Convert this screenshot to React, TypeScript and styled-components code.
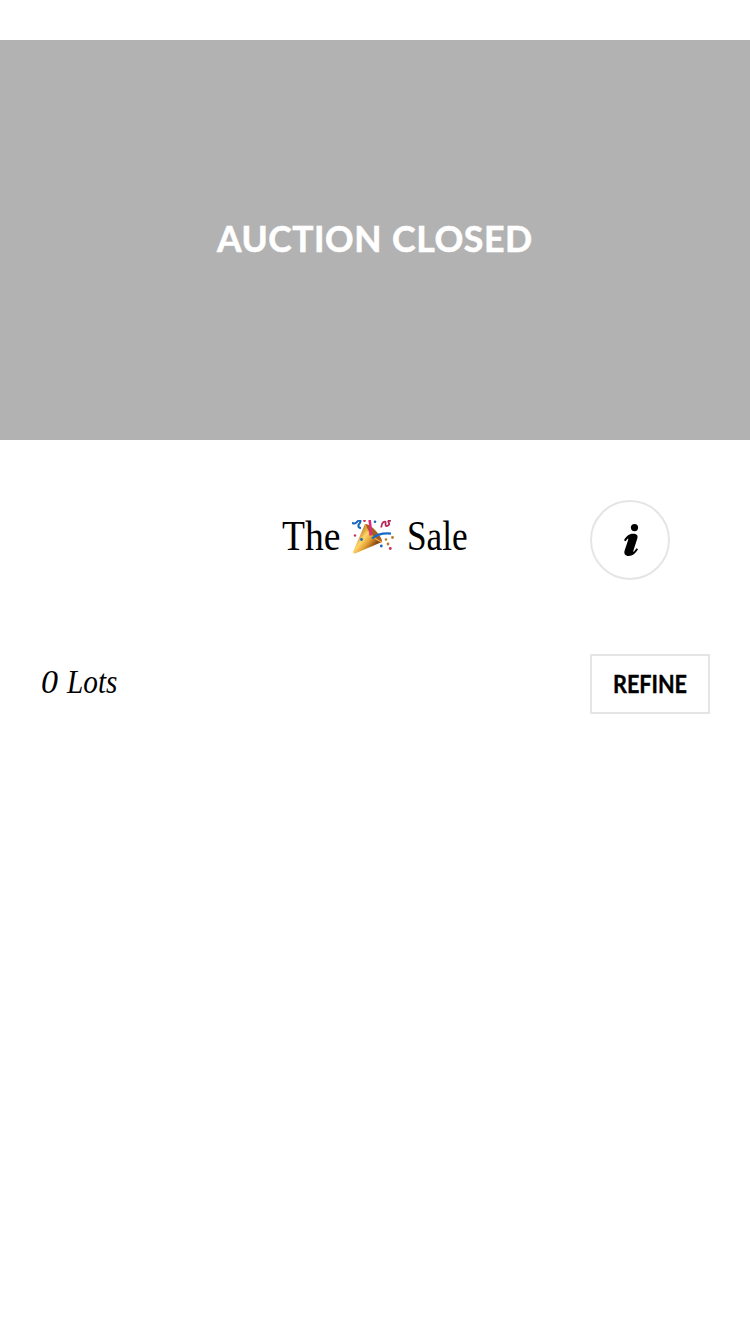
import React from 'react';
import styled, { createGlobalStyle } from 'styled-components';

const Global = createGlobalStyle`
  * { box-sizing: border-box; }
  html, body { margin: 0; background: #fff; color: #000; }
`;

const Page = styled.main`
  min-height: 1334px;
  padding-top: 40px;
  background: #fff;
`;

const Hero = styled.section`
  display: flex;
  align-items: center;
  justify-content: center;
  height: 400px;
  background: #b2b2b2;
`;

const HeroLabel = styled.div`
  display: flex;
  gap: 10px;
  padding: 0 1px 5px 0;
  font: 700 37px/48px Lato, sans-serif;
  color: #fff;
  -webkit-text-stroke: 0.6px currentColor;
`;

const Word = styled.span<{ $spacing?: number; $scale?: number; $width?: number }>`
  display: block;
  white-space: nowrap;
  width: ${p => (p.$width ? `${p.$width}px` : 'auto')};
  letter-spacing: ${p => p.$spacing ?? 0}px;
  transform: scaleX(${p => p.$scale ?? 1});
  transform-origin: left center;
`;

const TitleRow = styled.header`
  display: grid;
  grid-template-columns: 80px 1fr 80px;
  align-items: center;
  padding: 60px 80px 0;
`;

const Title = styled.h1`
  grid-column: 2;
  display: flex;
  justify-content: center;
  margin: 0;
  padding: 0 2px 9px 0;
  font: 400 42px/54px "Liberation Serif", serif;
`;

const Popper = styled.svg`
  width: 42px;
  height: 34px;
  margin: 11px 13px 0 12px;
`;

const InfoButton = styled.button`
  display: flex;
  align-items: center;
  justify-content: center;
  width: 80px;
  height: 80px;
  padding: 0 0 0 2px;
  border: 2px solid #e5e5e5;
  border-radius: 50%;
  background: #fff;
`;

const Toolbar = styled.div`
  display: flex;
  align-items: center;
  justify-content: space-between;
  padding: 74px 40px 0;
`;

const Lots = styled.p`
  display: flex;
  gap: 8px;
  margin: 0;
  padding: 0 0 4px 1px;
  font: italic 400 34px/56px "Liberation Serif", serif;
`;

const RefineButton = styled.button`
  display: flex;
  align-items: center;
  justify-content: center;
  width: 120px;
  height: 60px;
  padding: 0 0 0 2px;
  border: 2px solid #e5e5e5;
  background: #fff;
  color: #000;
  font: 700 24px/30px Lato, sans-serif;
  -webkit-text-stroke: 0.4px currentColor;
`;

const PartyPopper = () => (
  <Popper viewBox="0 0 42 34" aria-label="party popper">
    <defs>
      <linearGradient id="cone" x1="0" y1="0.2" x2="0.9" y2="0.9">
        <stop offset="0.15" stopColor="#b8701c" />
        <stop offset="0.4" stopColor="#ffd668" />
        <stop offset="0.6" stopColor="#e09a30" />
        <stop offset="0.8" stopColor="#8a4c12" />
      </linearGradient>
    </defs>
    <path d="M13 4C19 5 29 16 30 22L3 33.5Q.7 34 1.2 31.5Z" fill="url(#cone)" />
    <path d="M13 4C19 4 30 16 30 22C25 22 13 10 13 4Z" fill="#a65e20" />
    <path d="M13.5 4.5C14 11 23 20 29.5 21.8" fill="none" stroke="#edae43" strokeWidth="1.2" />
    <path d="M17.5-1Q18.8 7 18.5 15.5" fill="none" stroke="#dc2c7b" strokeWidth="2.6" />
    <path d="M20 18.5Q27 12.5 39 13.6" fill="none" stroke="#176bc8" strokeWidth="2.3" />
    <path d="M0 2.5Q2 4.5 4.5 2.5Q7-.5 8.5 1Q8.5 3 6.5 5Q6 8 9 8" fill="none" stroke="#1768bd" strokeWidth="2.1" />
    <path d="M29.5 7.5Q29 4 31.5 2Q34 .5 33.5 4Q33.5 7 36 5.5Q38 4.5 36.5 2Q35.5 .5 39 .5" fill="none" stroke="#b82659" strokeWidth="1.8" />
    <g fill="#c92f58"><circle cx="3" cy="15.5" r="1.2" /><circle cx="12.5" cy=".8" r="1.3" /><circle cx="38.3" cy="28.5" r="1.4" /></g>
    <g fill="#1768bd"><circle cx="23" cy="1.7" r="1.3" /><circle cx="9.5" cy="19.5" r="1.4" /><circle cx="29.3" cy="26" r="1.4" /></g>
    <g fill="#bd7a28"><circle cx="34" cy="19.5" r="1.3" /><circle cx="40.5" cy="17.5" r="1.4" /><circle cx="36" cy="24" r="1.4" /></g>
  </Popper>
);

const InfoIcon = () => (
  <svg width="16" height="34" viewBox="0 0 16 34" aria-hidden="true">
    <circle cx="11.5" cy="4.6" r="3.6" />
    <path d="M1 17.2C3.2 13.2 6 10.7 10 10.7C13.8 10.7 15.2 12.2 14.3 15.4L10.6 27C10 29 10.5 29.3 11.2 28.2L13.6 25.2L15 26.3C12.6 30.4 9.2 33 5.8 33C2 33 .6 30.6 1.7 27.2L4.9 17.7C5.6 15.5 5.2 15 4.2 16.2L2.5 18.3Z" />
  </svg>
);

export default function App() {
  return (
    <Page>
      <Global />
      <Hero>
        <HeroLabel>
          <Word $width={165} $spacing={0.6} $scale={0.955}>AUCTION</Word>{' '}
          <Word $width={141} $spacing={0.6} $scale={0.965}>CLOSED</Word>
        </HeroLabel>
      </Hero>
      <TitleRow>
        <Title>
          <Word $width={58} $scale={0.895}>The</Word>
          <PartyPopper />
          <Word $width={60} $scale={0.84}>Sale</Word>
        </Title>
        <InfoButton aria-label="Sale information"><InfoIcon /></InfoButton>
      </TitleRow>
      <Toolbar>
        <Lots>
          <Word $width={18}>0</Word>{' '}
          <Word $width={50} $scale={0.86}>Lots</Word>
        </Lots>
        <RefineButton><Word $width={76} $scale={0.9}>REFINE</Word></RefineButton>
      </Toolbar>
    </Page>
  );
}
